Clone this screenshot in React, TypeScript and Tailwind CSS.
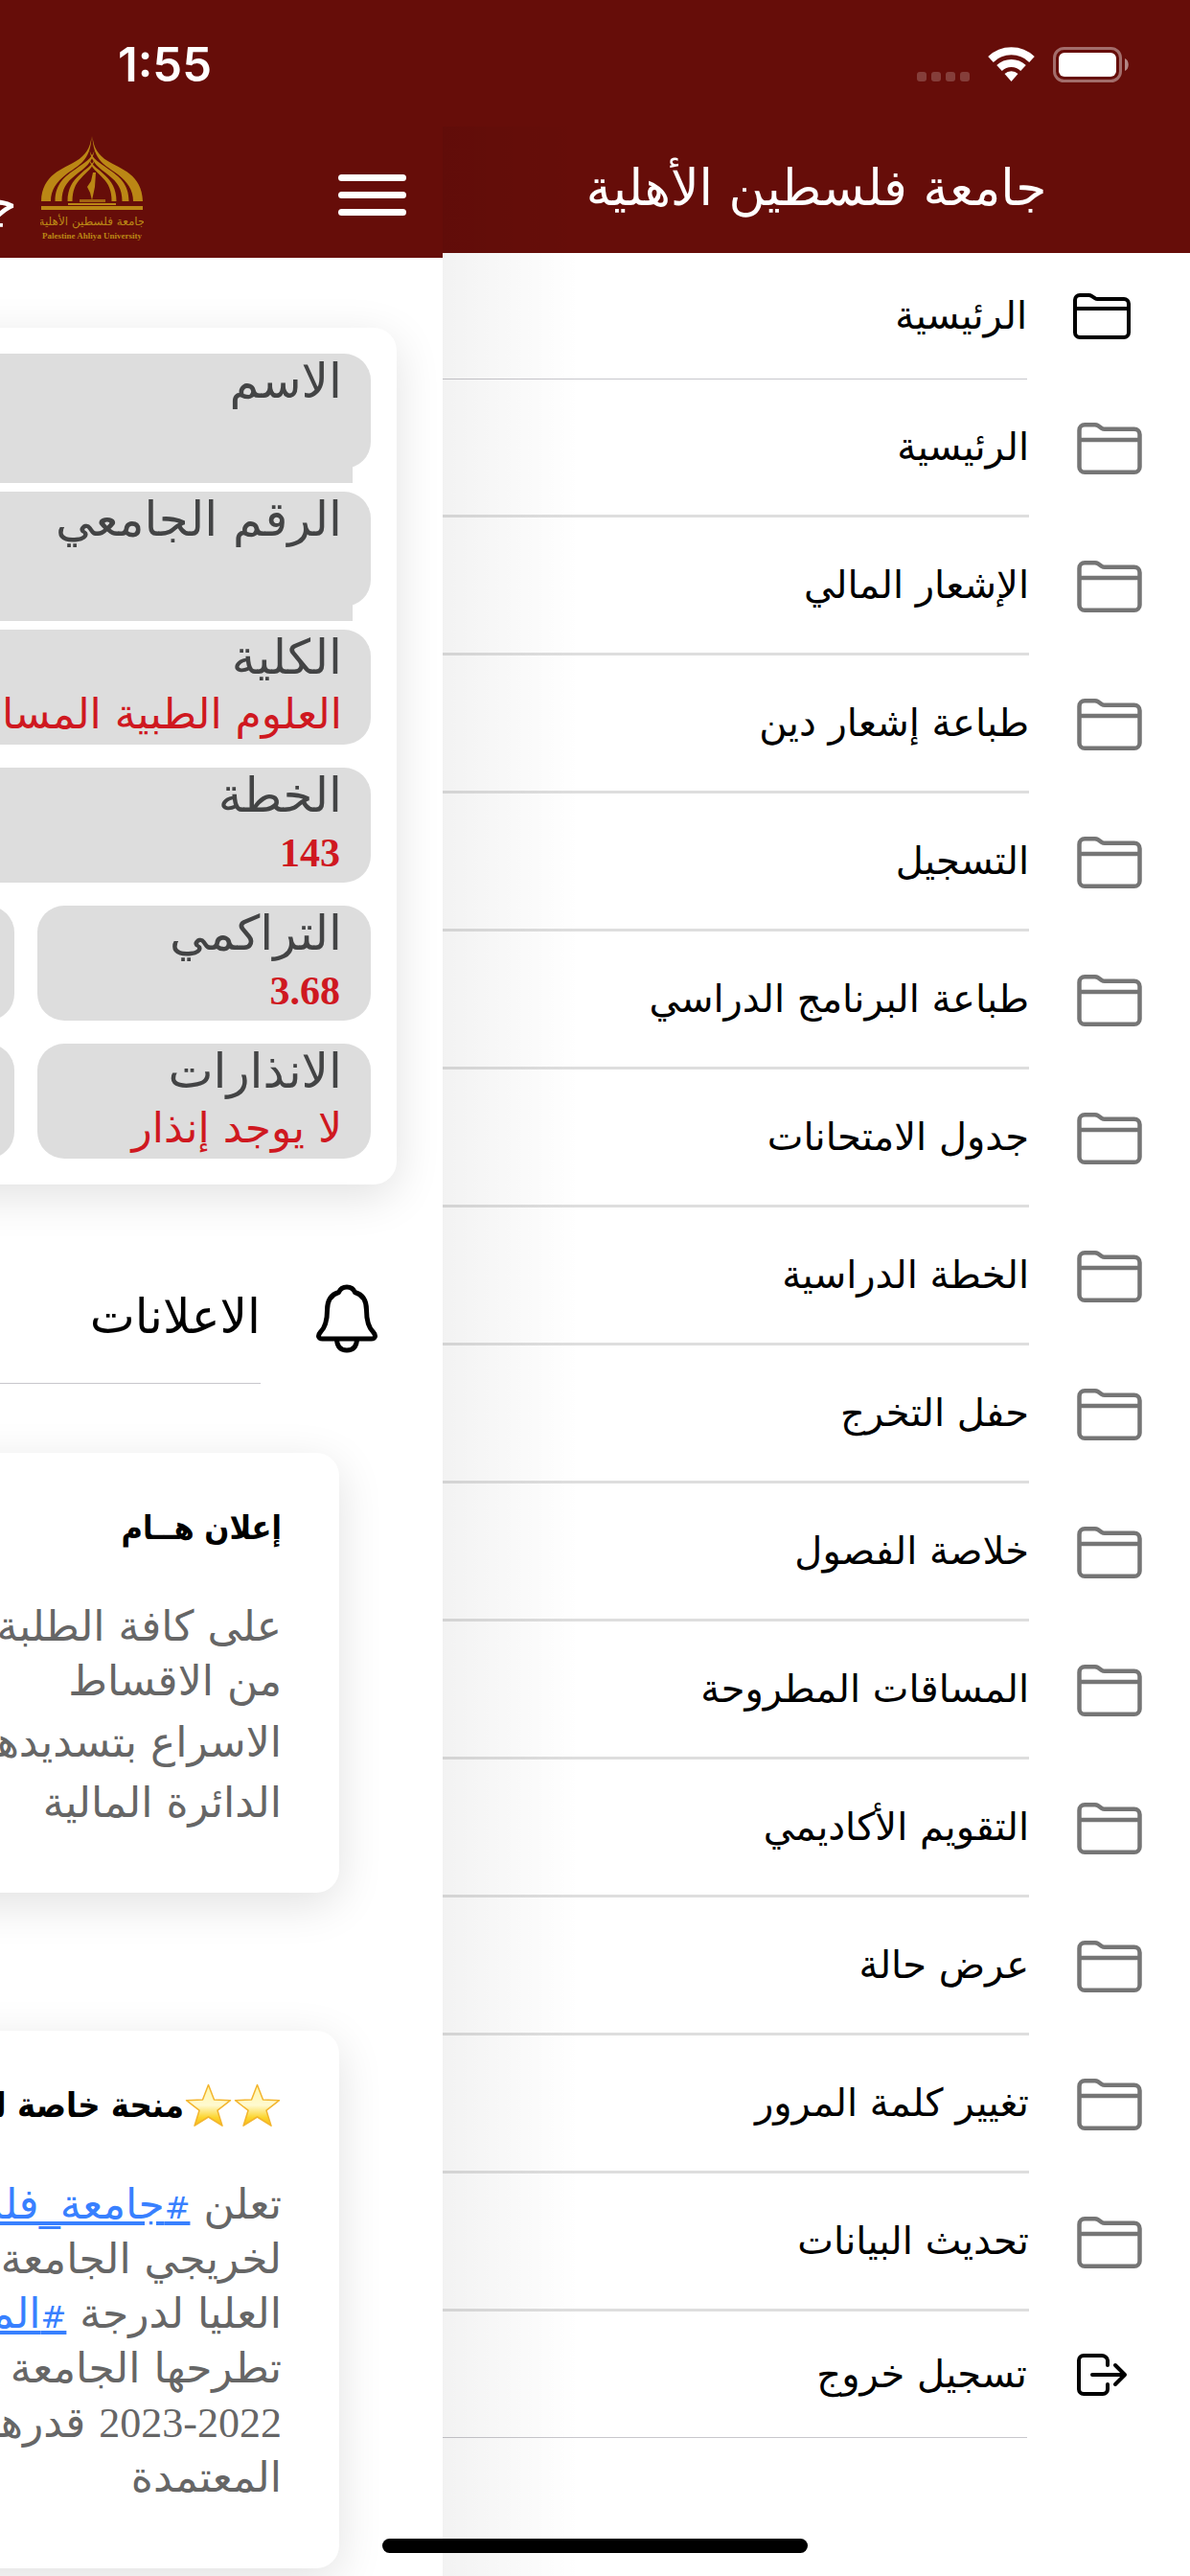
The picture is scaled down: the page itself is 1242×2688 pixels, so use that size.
import { IoFolderOutline, IoLogOutOutline } from "react-icons/io5"

const menuItems = [
  "الرئيسية",
  "الإشعار المالي",
  "طباعة إشعار دين",
  "التسجيل",
  "طباعة البرنامج الدراسي",
  "جدول الامتحانات",
  "الخطة الدراسية",
  "حفل التخرج",
  "خلاصة الفصول",
  "المساقات المطروحة",
  "التقويم الأكاديمي",
  "عرض حالة",
  "تغيير كلمة المرور",
  "تحديث البيانات",
]

// right half of each arch, the left half is the same path mirrored
const arches = (
  <>
    <path d="M54.500 0c1 12 6 20 16 26 13 8 36 14 36.500 42H97c0-12-6-20-16-28-12-9-26-14-26.500-40z" />
    <path d="M51.500 15c3 9 11 13 19 19 12 8 22 16 22 34h-7c0-13-5-20-14-27-10-8-18-13-20-26z" />
    <path d="M51.500 25c4 7 9 9 15 15 8 7 13 15 13 28h-5c0-11-3-18-9-24-6-7-13-11-14-19z" />
  </>
)

const Logo = () => (
  <svg width="108" height="112" viewBox="0 0 108 112" fill="#bb8715">
    {arches}
    <g transform="matrix(-1 0 0 1 108 0)">{arches}</g>
    <path d="M55 38h3l-1 15-3 14-2-8-3-6 4-6z" />
    <path d="M41 66h27v3H41z" opacity="0.7" />
    <path d="M29 70h50v2H29zM1 73h106v4H1z" />
    <text x="54" y="93" textAnchor="middle" fontSize="12" fontFamily="DejaVu Sans, sans-serif" direction="rtl">
      جامعة فلسطين الأهلية
    </text>
    <text x="54" y="107" textAnchor="middle" fontSize="9" fontWeight="700" fontFamily="Liberation Serif, serif">
      Palestine Ahliya University
    </text>
  </svg>
)

const Star = () => (
  <svg width="51" height="48" viewBox="0 0 51 48">
    <defs>
      <linearGradient id="star" x1="0" y1="0" x2="0" y2="1">
        <stop offset="0" stopColor="#fff6a8" />
        <stop offset="0.5" stopColor="#fffad0" />
        <stop offset="0.8" stopColor="#fcd52e" />
        <stop offset="1" stopColor="#f7ba14" />
      </linearGradient>
    </defs>
    <path
      d="M25.500 2.500l6 15.500 17 .7-13.500 10.500 5 16-14.500-9.200-14.500 9.200 5-16L2.500 18.700l17-.7z"
      fill="url(#star)"
      stroke="#f3b52d"
      strokeWidth="1.500"
      strokeLinejoin="round"
    />
  </svg>
)

const Bell = () => (
  <svg width="64" height="72" viewBox="0 0 64 72" fill="none" stroke="#000" strokeWidth="5" strokeLinejoin="round">
    <path d="M32 3c-4 0-7 2-8.500 5.500C15 11 11.500 18 11.500 27c0 12-2 18-7 23-3.500 4-2 7 2 7h51c4 0 5.500-3 2-7-5-5-7-11-7-23 0-9-3.500-16-12-18.500C39 5 36 3 32 3z" />
    <path d="M21.500 57c0 8 4 12 10.500 12s10.500-4 10.500-12" />
  </svg>
)

const Chip = ({ label, value, numeric }: { label: string; value?: string; numeric?: boolean }) => (
  <div className="h-[120px] flex-1 rounded-[28px] bg-[#ddd] whitespace-nowrap">
    <div className="h-14 pr-[30px] text-[50px] leading-[58px] text-[#434445]">{label}</div>
    {value ? (
      <div
        className={
          numeric
            ? "pr-[32px] font-['Liberation_Serif',serif] text-[42px] leading-[66px] font-bold text-[#cf1820]"
            : "pr-[30px] text-[44px] leading-16 text-[#cf1820]"
        }
      >
        {value}
      </div>
    ) : (
      <div className="mt-1.5 mr-[19px] h-[73px] bg-[#ddd]" />
    )}
  </div>
)

const StatusBar = () => (
  <div className="absolute inset-x-0 top-0 flex h-[132px] items-start justify-between pt-[44px] pr-[63px] pl-[123px] text-white">
    <span className="font-['Inter',sans-serif] text-[49px] leading-12 font-semibold">1:55</span>
    <svg width="222" height="44" viewBox="957 44 222 44" fill="#fff">
      <g opacity="0.2">
        <rect x="957" y="75" width="10" height="10" rx="3" />
        <rect x="972" y="75" width="10" height="10" rx="3" />
        <rect x="987" y="75" width="10" height="10" rx="3" />
        <rect x="1002" y="75" width="10" height="10" rx="3" />
      </g>
      <g fill="none" stroke="#fff" strokeWidth="8">
        <path d="M1034 62a31 31 0 0 1 43 0" />
        <path d="M1043 71a18 18 0 0 1 25 0" />
      </g>
      <path d="M1055.500 85l-7-8a10 10 0 0 1 14 0z" />
      <rect x="1100.500" y="50.500" width="69" height="34" rx="10" fill="none" stroke="#fff" strokeWidth="3" opacity="0.4" />
      <rect x="1105" y="55" width="60" height="25" rx="6" />
      <path d="M1174 61c5 2 5 11 0 13z" opacity="0.5" />
    </svg>
  </div>
)

const Hashtag = ({ href, name }: { href: string; name: string }) => (
  <a href={href} className="text-[#3880ff] underline">
    <span className="text-[32px] leading-none">#</span>
    {name}
  </a>
)

const Home = () => (
  <main dir="rtl" className="min-w-0 flex-1 overflow-hidden bg-white">
    <div className="w-screen">
      <header className="flex h-[269px] items-start bg-[#660d09] pr-[38px] text-white">
        <button aria-label="القائمة" className="mt-[182px] flex w-[71px] flex-col gap-[11px]">
          <span className="h-[7px] w-full rounded-full bg-white" />
          <span className="h-[7px] w-full rounded-full bg-white" />
          <span className="h-[7px] w-full rounded-full bg-white" />
        </button>
        <span className="mt-[142px] mr-[203px]">
          <Logo />
        </span>
        <h1 className="mt-[175px] mr-6 text-[52px] leading-[72px] whitespace-nowrap">جامعة فلسطين الأهلية</h1>
      </header>

      <section className="mt-[73px] mr-12 flex flex-col gap-6 rounded-[24px] bg-white p-[27px] shadow-[0_12px_48px_rgba(0,0,0,0.12)]">
        <div className="flex">
          <Chip label="الاسم" />
        </div>
        <div className="flex">
          <Chip label="الرقم الجامعي" />
        </div>
        <div className="flex">
          <Chip label="الكلية" value="العلوم الطبية المساندة" />
        </div>
        <div className="flex">
          <Chip label="الخطة" value="143" numeric />
        </div>
        <div className="grid grid-cols-[348px_348px] gap-6">
          <Chip label="التراكمي" value="3.68" numeric />
          <Chip label="" value=" " />
          <Chip label="الانذارات" value="لا يوجد إنذار" />
          <Chip label="" value=" " />
        </div>
      </section>

      <div className="mt-[72px] flex h-[136px] pr-[68px]">
        <span className="mt-8">
          <Bell />
        </span>
        <h2 className="mr-[58px] flex-1 border-b border-[#c8c7cc] text-[50px] leading-[133px]">الاعلانات</h2>
      </div>

      <article className="mt-18 mr-[108px] h-[459px] rounded-[24px] bg-white pt-12 pr-[60px] whitespace-nowrap shadow-[0_12px_48px_rgba(0,0,0,0.12)]">
        <h3 className="font-['DejaVu_Sans_Condensed','DejaVu_Sans',sans-serif] text-[34px] leading-15 font-bold">
          إعلان هــام
        </h3>
        <div className="mt-11 flex flex-col gap-1 text-[44px] text-[#666]">
          <p className="leading-[57px]">
            على كافة الطلبة
            <br />
            من الاقساط
          </p>
          <p className="leading-[63px]">
            الاسراع بتسديدها
            <br />
            الدائرة المالية
          </p>
        </div>
      </article>

      <article className="mt-36 mr-[108px] h-[561px] rounded-[24px] bg-white pt-12 pr-[60px] whitespace-nowrap shadow-[0_12px_48px_rgba(0,0,0,0.12)]">
        <h3 className="flex items-center font-['DejaVu_Sans_Condensed','DejaVu_Sans',sans-serif] text-[36px] leading-15 font-bold">
          <Star />
          <Star />
          منحة خاصة لخريجي الجامعة
        </h3>
        <div className="mt-11 text-[44px] leading-[57px] text-[#666]">
          <p>
            تعلن <Hashtag href="#university" name="جامعة_فلسطين" />
          </p>
          <p>لخريجي الجامعة</p>
          <p>
            العليا لدرجة <Hashtag href="#master" name="الماجستير" />
          </p>
          <p>تطرحها الجامعة</p>
          <p>
            <span className="font-['Liberation_Serif',serif] leading-none">2023-2022</span> قدرها
          </p>
          <p>المعتمدة</p>
        </div>
      </article>
    </div>
  </main>
)

const Drawer = () => (
  <aside dir="rtl" className="relative w-[780px] shrink-0 bg-white">
    <header className="flex h-[264px] items-end justify-center bg-[#660d09] pb-[30px]">
      <h2 className="text-[52px] leading-[76px] text-white">جامعة فلسطين الأهلية</h2>
    </header>
    <nav className="text-[40px] whitespace-nowrap">
      <a href="#home" className="flex h-[132px] items-center pr-[60px]">
        <IoFolderOutline className="size-16" />
        <span className="mr-[46px] flex-1 self-stretch border-b border-[#c8c7cc] leading-[131px]">الرئيسية</span>
      </a>
      {menuItems.map((item) => (
        <a key={item} href="#page" className="flex h-36 items-center pr-12">
          <IoFolderOutline className="size-18 text-[#757575]" />
          <span className="mr-12 flex-1 self-stretch border-b-3 border-[#dedede] leading-[141px]">{item}</span>
        </a>
      ))}
      <a href="#logout" className="flex h-[132px] items-center pr-[60px]">
        <IoLogOutOutline className="size-16" />
        <span className="mr-[46px] flex-1 self-stretch border-b border-[#c8c7cc] leading-[131px]">تسجيل خروج</span>
      </a>
    </nav>
    <div className="pointer-events-none absolute top-[132px] bottom-0 left-0 w-36 bg-linear-to-r from-black/5 to-transparent" />
  </aside>
)

export default function App() {
  return (
    <div className="relative flex min-h-screen overflow-hidden bg-white font-['DejaVu_Sans',sans-serif] text-black">
      <Home />
      <Drawer />
      <StatusBar />
      <div className="fixed bottom-6 left-1/2 h-[15px] w-[444px] -translate-x-1/2 rounded-full bg-black" />
    </div>
  )
}
